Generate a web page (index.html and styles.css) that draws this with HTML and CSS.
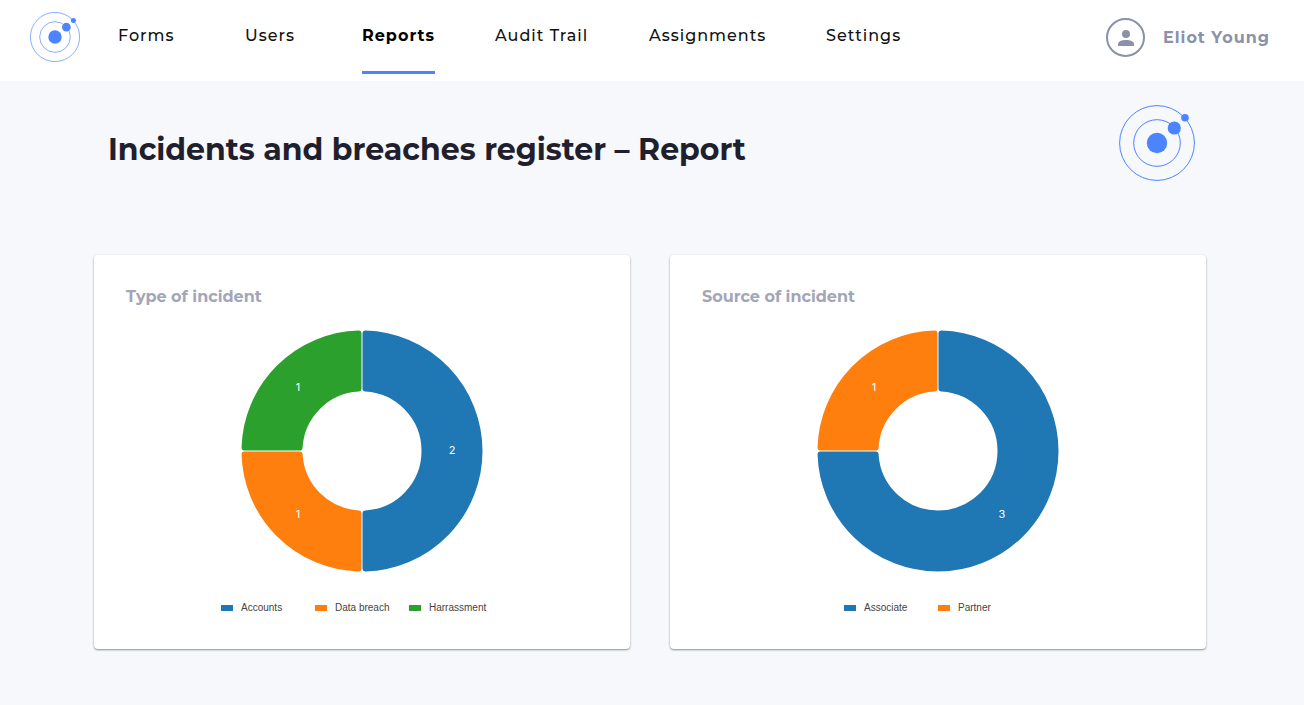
FILE: index.html
```html
<!DOCTYPE html>
<html lang="en">
<head>
<meta charset="utf-8">
<meta name="viewport" content="width=device-width, initial-scale=1">
<title>Incidents and breaches register – Report</title>
<link rel="stylesheet" href="styles.css">
</head>
<body>
<svg class="defs" aria-hidden="true">
  <symbol id="orbit" viewBox="0 0 76 76">
    <g fill="none" stroke="currentColor">
      <circle cx="38" cy="38" r="37.4"/>
      <circle cx="38" cy="38" r="23.3"/>
    </g>
    <g fill="currentColor">
      <circle cx="38" cy="38" r="10.2"/>
      <circle cx="55.3" cy="23" r="6.6"/>
      <circle cx="66" cy="12.8" r="3.8"/>
    </g>
  </symbol>
</svg>

<header class="topbar">
  <a class="brand" href="#" aria-label="Home"><svg class="brand-logo"><use href="#orbit"/></svg></a>
  <nav class="nav" aria-label="Main">
    <a href="#">Forms</a>
    <a href="#">Users</a>
    <a class="active" href="#" aria-current="page">Reports</a>
    <a href="#">Audit Trail</a>
    <a href="#">Assignments</a>
    <a href="#">Settings</a>
  </nav>
  <button class="user" type="button">
    <span class="avatar">
      <svg viewBox="0 0 16 16"><circle cx="8" cy="4" r="4"/><path d="M0 16v-2c0-2.700 4-4 8-4s8 1.300 8 4v2z"/></svg>
    </span>
    <span>Eliot Young</span>
  </button>
</header>

<main class="page">
  <div class="page-head">
    <h1>Incidents and breaches register – Report</h1>
    <svg class="page-logo" aria-hidden="true"><use href="#orbit"/></svg>
  </div>

  <div class="cards">
    <section class="card">
      <h2>Type of incident</h2>
      <svg class="donut" viewBox="-121 -121 242 242" role="img" aria-label="Type of incident">
        <path class="blue" d="M3.500-117.450A117.500 117.500 0 0 1 117.500 0A117.500 117.500 0 0 1 3.500 117.450V62.400A62.500 62.500 0 0 0 62.500 0A62.500 62.500 0 0 0 3.500-62.400Z"/>
        <path class="orange" d="M-3.500 117.450A117.500 117.500 0 0 1-117.450 3.500H-62.400A62.500 62.500 0 0 0-3.500 62.400Z"/>
        <path class="green" d="M-117.450-3.500A117.500 117.500 0 0 1-3.500-117.450V-62.400A62.500 62.500 0 0 0-62.400-3.500Z"/>
        <text x="90" y="3">2</text>
        <text x="-64" y="67">1</text>
        <text x="-64" y="-60">1</text>
      </svg>
      <ul class="legend">
        <li><i class="blue"></i>Accounts</li>
        <li><i class="orange"></i>Data breach</li>
        <li><i class="green"></i>Harrassment</li>
      </ul>
    </section>

    <section class="card">
      <h2>Source of incident</h2>
      <svg class="donut" viewBox="-121 -121 242 242" role="img" aria-label="Source of incident">
        <path class="blue" d="M3.500-117.450A117.500 117.500 0 0 1 117.500 0A117.500 117.500 0 0 1 0 117.500A117.500 117.500 0 0 1-117.450 3.500H-62.400A62.500 62.500 0 0 0 0 62.500A62.500 62.500 0 0 0 62.500 0A62.500 62.500 0 0 0 3.500-62.400Z"/>
        <path class="orange" d="M-117.450-3.500A117.500 117.500 0 0 1-3.500-117.450V-62.400A62.500 62.500 0 0 0-62.400-3.500Z"/>
        <text x="64" y="67">3</text>
        <text x="-64" y="-60">1</text>
      </svg>
      <ul class="legend">
        <li><i class="blue"></i>Associate</li>
        <li><i class="orange"></i>Partner</li>
      </ul>
    </section>
  </div>
</main>
</body>
</html>
```
FILE: styles.css
```css
* {
  box-sizing: border-box;
}

body {
  margin: 0;
  min-height: 100vh;
  background: #f6f8fc;
  color: #1f1f2e;
  font-family: Montserrat, Inter, sans-serif;
}

.defs {
  display: none;
}

.topbar {
  display: flex;
  align-items: flex-start;
  padding: 12px 34px 7px 30px;
  background: #fff;
}

.brand {
  color: #4c84ff;
}

.brand-logo {
  display: block;
  width: 50px;
  height: 50px;
}

.nav {
  display: grid;
  grid-template-columns: 127px 117px 133px 154px 177px auto;
  justify-items: start;
  margin-left: 38px;
}

.nav a {
  height: 62px;
  padding-top: 12px;
  color: #111;
  font-size: 16px;
  font-weight: 500;
  line-height: 24px;
  letter-spacing: 1px;
  text-decoration: none;
  white-space: nowrap;
}

.nav .active {
  color: #000;
  font-weight: 700;
  border-bottom: 3px solid #4c84ff;
}

.user {
  display: flex;
  align-items: center;
  gap: 18px;
  margin: 6px 0 0 auto;
  padding: 0;
  border: 0;
  background: none;
  color: #8a91a8;
  font: inherit;
  font-size: 16px;
  font-weight: 700;
  line-height: 22px;
  letter-spacing: 1px;
  white-space: nowrap;
}

.avatar {
  display: flex;
  align-items: center;
  justify-content: center;
  width: 39px;
  height: 39px;
  border: 2px solid;
  border-radius: 50%;
}

.avatar svg {
  width: 16px;
  height: 16px;
  fill: currentColor;
}

.page {
  padding: 24px 98px 56px 94px;
}

.page-head {
  display: flex;
  align-items: flex-start;
  justify-content: space-between;
  padding: 0 11px 0 14px;
}

h1 {
  margin: 25px 0 0;
  font-size: 30px;
  font-weight: 700;
  line-height: 40px;
}

.page-logo {
  width: 76px;
  height: 76px;
  color: #4c84ff;
}

.cards {
  display: grid;
  grid-template-columns: 1fr 1fr;
  gap: 40px;
  margin-top: 74px;
}

.card {
  padding: 30px 32px 35px;
  border-radius: 4px;
  background: #fff;
  box-shadow: 0 1px 2px rgba(31, 35, 50, 0.5);
}

h2 {
  margin: 0;
  color: #a3a5b9;
  font-size: 16px;
  font-weight: 700;
  line-height: 24px;
}

.donut {
  display: block;
  width: 242px;
  height: 242px;
  margin: 21px auto 0;
}

.donut path {
  stroke-width: 6px;
  stroke-linejoin: round;
}

.donut text {
  fill: #fff;
  stroke: none;
  font-family: Inter, sans-serif;
  font-size: 11px;
  text-anchor: middle;
}

.blue {
  fill: #1f77b4;
  stroke: #1f77b4;
  background: #1f77b4;
}

.orange {
  fill: #ff7f0e;
  stroke: #ff7f0e;
  background: #ff7f0e;
}

.green {
  fill: #2ca02c;
  stroke: #2ca02c;
  background: #2ca02c;
}

.legend {
  display: grid;
  grid-auto-flow: column;
  grid-auto-columns: 94px;
  justify-content: center;
  margin: 30px 0 0;
  padding: 0;
  list-style: none;
  color: #444;
  font-family: "Liberation Sans", Arial, sans-serif;
  font-size: 10px;
  line-height: 12px;
}

.legend li {
  display: flex;
  align-items: center;
  gap: 8px;
}

.legend i {
  width: 12px;
  height: 6px;
}
```
